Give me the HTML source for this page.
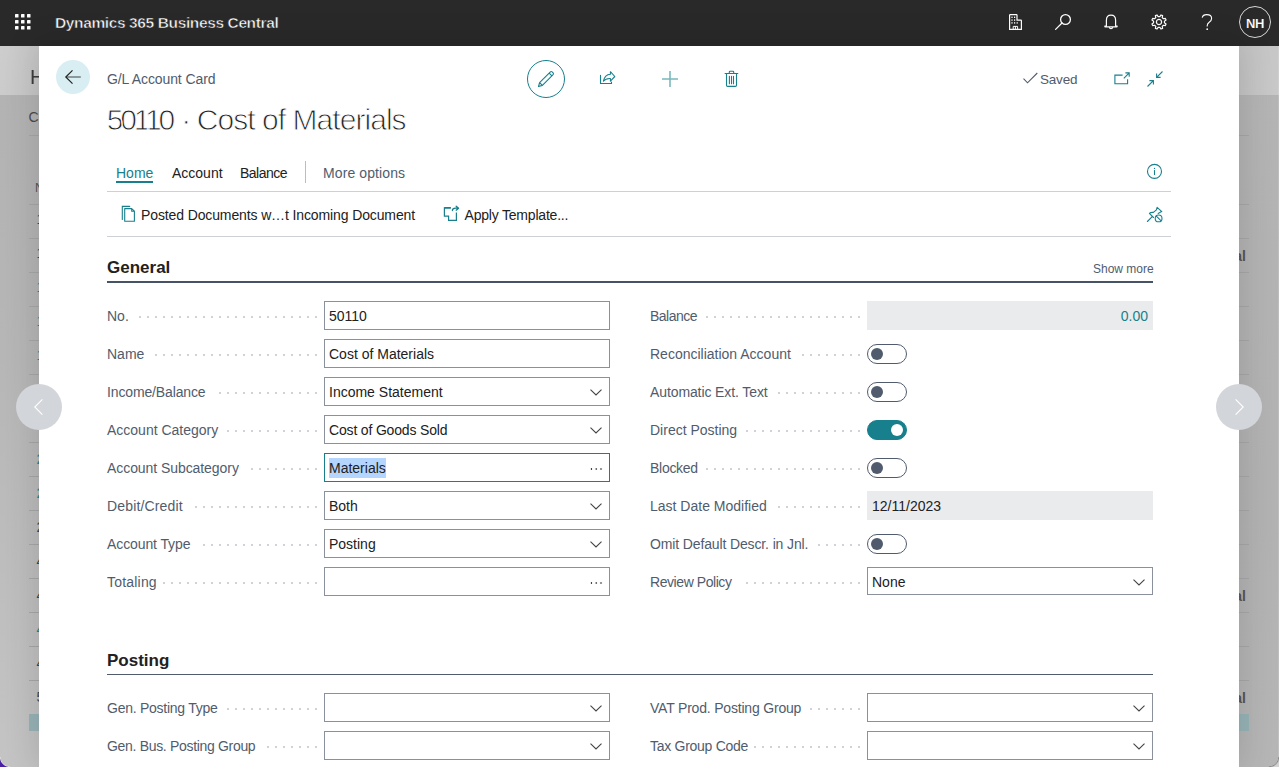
<!DOCTYPE html>
<html><head><meta charset="utf-8">
<style>
*{box-sizing:border-box;margin:0;padding:0}
html,body{width:1279px;height:767px;overflow:hidden;background:#bdbdbd;font-family:"Liberation Sans",sans-serif;position:relative}
#wrap{position:absolute;left:0;top:0;width:1279px;height:767px;will-change:opacity;opacity:0.999}
.a{position:absolute}
.t{position:absolute;white-space:nowrap;line-height:1}
#top{position:absolute;left:0;top:0;width:1279px;height:46px;background:#292929}
#bg{position:absolute;left:0;top:46px;width:1279px;height:721px;background:linear-gradient(20deg,#c4c4c4 0%,#b6b6b6 35%,#b2b2b2 60%,#b4b4b4 100%)}
#bghead{position:absolute;left:0;top:46px;width:1279px;height:50px;background:linear-gradient(100deg,#cdcdcd,#c5c5c5 4%,#c3c3c3 96%,#c8c8c8);border-bottom:1px solid #b3b3b3}
.bl{position:absolute;height:1px;background:#a6a6a6}
#dlg{position:absolute;left:39px;top:46px;width:1200px;height:721px;background:#fff;box-shadow:0 0 30px 4px rgba(0,0,0,0.12)}
.lbl{position:absolute;white-space:nowrap;line-height:1;font-size:14px;color:#505c6d}
.dots{position:absolute;height:2px;background-image:radial-gradient(circle,#d0d2d7 0.9px,transparent 1.1px);background-size:8px 2px;background-repeat:repeat-x}
.box{position:absolute;width:286px;height:29px;border:1px solid #8a919c;background:#fff}
.val{position:absolute;left:4px;top:7px;font-size:14px;line-height:1;color:#212121;white-space:nowrap}
.sel{background:#b4d5fe;padding:2px 0 2px 0}
.ro{position:absolute;width:286px;height:29px;background:#eaebed}
.chev{position:absolute;right:7px;top:11px}
.tog{position:absolute;width:40px;height:20px;border:1px solid #505c6d;border-radius:10px}
.tog i{position:absolute;left:3px;top:3px;width:12px;height:12px;border-radius:6px;background:#505c6d}
.tog.on{background:#17808c;border-color:#17808c}
.tog.on i{left:23px;background:#fff}
.ell{position:absolute;right:6px;top:14px;width:14px;height:2px;background-image:radial-gradient(circle,#333 0.8px,transparent 1.1px);background-size:4.8px 2px}
.ico{position:absolute;overflow:visible}
</style></head><body><div id="wrap">
<div id="top">
  <svg class="a" style="left:13px;top:12px" width="20" height="20" viewBox="0 0 20 20" fill="#fff">
    <rect x="2" y="2" width="3.5" height="3.5" rx=".6"/><rect x="8" y="2" width="3.5" height="3.5" rx=".6"/><rect x="14" y="2" width="3.5" height="3.5" rx=".6"/>
    <rect x="2" y="8" width="3.5" height="3.5" rx=".6"/><rect x="8" y="8" width="3.5" height="3.5" rx=".6"/><rect x="14" y="8" width="3.5" height="3.5" rx=".6"/>
    <rect x="2" y="14" width="3.5" height="3.5" rx=".6"/><rect x="8" y="14" width="3.5" height="3.5" rx=".6"/><rect x="14" y="14" width="3.5" height="3.5" rx=".6"/>
  </svg>
  <div class="t" style="left:55px;top:15px;font-size:15.5px;font-weight:700;color:#fff;letter-spacing:-0.38px;-webkit-text-stroke:0.5px #292929">Dynamics 365 Business Central</div>
  <!-- building -->
  <svg class="ico" style="left:1009px;top:14px" width="13" height="16" viewBox="0 0 13 16" fill="none" stroke="#fff" stroke-width="1.2">
    <path d="M0.6 15.4V1.2Q0.6 0.6 1.2 0.6H7.4Q8 0.6 8 1.2V6.2H11.8Q12.4 6.2 12.4 6.8V15.4Z"/>
    <path d="M4.2 15.4V12.4H8.6V15.4M6.4 12.4V15.4" stroke-width="1"/>
    <g fill="#fff" stroke="none"><rect x="2.4" y="2.6" width="1.2" height="1.4"/><rect x="5" y="2.6" width="1.2" height="1.4"/><rect x="2.4" y="5.4" width="1.2" height="1.4"/><rect x="5" y="5.4" width="1.2" height="1.4"/><rect x="2.4" y="8.2" width="1.2" height="1.4"/><rect x="5" y="8.2" width="1.2" height="1.4"/><rect x="7.6" y="8.2" width="1.2" height="1.4"/></g>
  </svg>
  <!-- search -->
  <svg class="ico" style="left:1055px;top:14px" width="16" height="16" viewBox="0 0 16 16" fill="none" stroke="#fff" stroke-width="1.3">
    <circle cx="10.5" cy="5.5" r="4.9"/><path d="M7 9L0.6 15.4" stroke-linecap="round"/>
  </svg>
  <!-- bell -->
  <svg class="ico" style="left:1104px;top:14px" width="14" height="16" viewBox="0 0 14 16" fill="none" stroke="#fff" stroke-width="1.2">
    <path d="M2.4 12.2V6.2Q2.4 1.2 7 1.2Q11.6 1.2 11.6 6.2V12.2H13.2Q13.2 12.9 12.5 12.9H1.5Q0.8 12.9 0.8 12.2Z" stroke-linejoin="round"/><path d="M5.3 13.2Q5.5 14.6 7 14.6Q8.5 14.6 8.7 13.2"/>
  </svg>
  <!-- gear -->
  <svg class="ico" style="left:1151px;top:14px" width="16" height="16" viewBox="-8 -8 16 16" fill="none" stroke="#fff" stroke-width="1.2">
    <path d="M5.43 0.86 L7.04 1.93 L6.34 3.62 L4.45 3.23 L3.23 4.45 L3.62 6.34 L1.93 7.04 L0.86 5.43 L-0.86 5.43 L-1.93 7.04 L-3.62 6.34 L-3.23 4.45 L-4.45 3.23 L-6.34 3.62 L-7.04 1.93 L-5.43 0.86 L-5.43 -0.86 L-7.04 -1.93 L-6.34 -3.62 L-4.45 -3.23 L-3.23 -4.45 L-3.62 -6.34 L-1.93 -7.04 L-0.86 -5.43 L0.86 -5.43 L1.93 -7.04 L3.62 -6.34 L3.23 -4.45 L4.45 -3.23 L6.34 -3.62 L7.04 -1.93 L5.43 -0.86Z" stroke-linejoin="round"/>
    <circle r="2.6"/>
  </svg>
  <!-- question -->
  <svg class="ico" style="left:1201px;top:14px" width="12" height="17" viewBox="0 0 12 17" fill="none" stroke="#fff" stroke-width="1.1">
    <path d="M1.2 3.6Q1.8 0.6 5.6 0.6Q10.6 0.6 10.6 4.4Q10.6 6.6 8.2 8.2Q6.2 9.6 6.2 11.8V12.4"/><circle cx="6.2" cy="15.2" r="0.9" fill="#fff" stroke="none"/>
  </svg>
  <!-- avatar -->
  <div class="a" style="left:1239px;top:6px;width:32px;height:32px;border:1px solid #d8d8d8;border-radius:16px"></div>
  <div class="t" style="left:1246px;top:16.5px;font-size:13px;font-weight:700;color:#fff;letter-spacing:-0.3px;-webkit-text-stroke:0.15px #292929">NH</div>
</div>

<div id="bg"></div>
<div id="bghead"></div>
<!-- background page fragments -->
<div class="t" style="left:30px;top:66.5px;font-size:20px;color:#3c3c3c">H</div>
<div class="t" style="left:28.5px;top:110px;font-size:14px;color:#4a4a4a">C</div>
<div class="t" style="left:35px;top:182px;font-size:12px;color:#555">N</div>
<div class="t" style="left:1206px;top:249px;font-size:14px;font-weight:700;color:#555;width:40px;text-align:right">Total</div>
<div class="t" style="left:1206px;top:589px;font-size:14px;font-weight:700;color:#555;width:40px;text-align:right">Total</div>
<div class="t" style="left:1206px;top:691px;font-size:14px;font-weight:700;color:#555;width:40px;text-align:right">Total</div>
<div class="a" style="left:0;top:757px;width:10px;height:10px;background:radial-gradient(circle at 10px 0,transparent 9px,#d8d8d8 9.6px,#4b1fa3 10.6px)"></div>
<div class="t" style="left:36.5px;top:212px;font-size:14px;color:#444">1</div>
<div class="t" style="left:36.5px;top:246px;font-size:14px;color:#444">1</div>
<div class="t" style="left:36.5px;top:280px;font-size:14px;color:#2a7f86">1</div>
<div class="t" style="left:36.5px;top:314px;font-size:14px;color:#2a7f86">1</div>
<div class="t" style="left:36.5px;top:348px;font-size:14px;color:#2a7f86">1</div>
<div class="t" style="left:36.5px;top:416px;font-size:14px;color:#444">1</div>
<div class="t" style="left:36.5px;top:452px;font-size:14px;color:#2a7f86">2</div>
<div class="t" style="left:36.5px;top:486px;font-size:14px;color:#2a7f86">2</div>
<div class="t" style="left:36.5px;top:520px;font-size:14px;color:#444">2</div>
<div class="t" style="left:36.5px;top:554px;font-size:14px;color:#444">4</div>
<div class="t" style="left:36.5px;top:588px;font-size:14px;color:#444">4</div>
<div class="t" style="left:36.5px;top:622px;font-size:14px;color:#2a7f86">4</div>
<div class="t" style="left:36.5px;top:656px;font-size:14px;color:#444">4</div>
<div class="t" style="left:36.5px;top:690px;font-size:14px;color:#444">5</div>
<div class="t" style="left:36.5px;top:715px;font-size:14px;color:#444">6</div>
<div class="a" style="left:1278px;top:46px;width:1px;height:721px;background:rgba(255,255,255,0.15)"></div>
<div class="a" style="left:1269px;top:757px;width:10px;height:10px;background:radial-gradient(circle at 0 0,transparent 9px,#8e8e8e 9.6px,#d3d3d3 10.8px)"></div>
<div class="bl" style="left:29px;top:135px;width:10px"></div>
<div class="bl" style="left:1239px;top:135px;width:10px"></div>
<div class="bl" style="left:29px;top:204px;width:10px"></div>
<div class="bl" style="left:1239px;top:204px;width:10px"></div>
<div class="bl" style="left:29px;top:238px;width:10px"></div>
<div class="bl" style="left:1239px;top:238px;width:10px"></div>
<div class="bl" style="left:29px;top:272px;width:10px"></div>
<div class="bl" style="left:1239px;top:272px;width:10px"></div>
<div class="bl" style="left:29px;top:306px;width:10px"></div>
<div class="bl" style="left:1239px;top:306px;width:10px"></div>
<div class="bl" style="left:29px;top:340px;width:10px"></div>
<div class="bl" style="left:1239px;top:340px;width:10px"></div>
<div class="bl" style="left:29px;top:374px;width:10px"></div>
<div class="bl" style="left:1239px;top:374px;width:10px"></div>
<div class="bl" style="left:29px;top:408px;width:10px"></div>
<div class="bl" style="left:1239px;top:408px;width:10px"></div>
<div class="bl" style="left:29px;top:442px;width:10px"></div>
<div class="bl" style="left:1239px;top:442px;width:10px"></div>
<div class="bl" style="left:29px;top:476px;width:10px"></div>
<div class="bl" style="left:1239px;top:476px;width:10px"></div>
<div class="bl" style="left:29px;top:510px;width:10px"></div>
<div class="bl" style="left:1239px;top:510px;width:10px"></div>
<div class="bl" style="left:29px;top:544px;width:10px"></div>
<div class="bl" style="left:1239px;top:544px;width:10px"></div>
<div class="bl" style="left:29px;top:578px;width:10px"></div>
<div class="bl" style="left:1239px;top:578px;width:10px"></div>
<div class="bl" style="left:29px;top:612px;width:10px"></div>
<div class="bl" style="left:1239px;top:612px;width:10px"></div>
<div class="bl" style="left:29px;top:646px;width:10px"></div>
<div class="bl" style="left:1239px;top:646px;width:10px"></div>
<div class="bl" style="left:29px;top:680px;width:10px"></div>
<div class="bl" style="left:1239px;top:680px;width:10px"></div>
<div class="a" style="left:29px;top:714px;width:10px;height:17px;background:#97b3b6"></div>
<div class="a" style="left:1239px;top:714px;width:10px;height:17px;background:#97b3b6"></div>

<div id="dlg"></div>

<!-- header -->
<div class="a" style="left:56px;top:60px;width:34px;height:34px;border-radius:17px;background:#d8eef2"></div>
<svg class="ico" style="left:65px;top:70px" width="16" height="14" viewBox="0 0 16 14" fill="none" stroke="#404040" stroke-width="1.3">
  <path d="M1.5 7H15.8" stroke="#6a7474" stroke-width="1.4"/><path d="M7.5 0.4L0.8 7L7.5 13.6" stroke="#222" stroke-width="1.2"/>
</svg>
<div class="t" style="left:107px;top:72px;font-size:14px;color:#505c6d;letter-spacing:-0.1px">G/L Account Card</div>
<div class="t" style="left:106.75px;top:104.5px;font-size:30px;color:#222;letter-spacing:-3.2px;-webkit-text-stroke:0.9px #fff">50110</div>
<div class="t" style="left:181.25px;top:104.5px;font-size:30px;color:#222;-webkit-text-stroke:0.9px #fff">·</div>
<div class="t" style="left:196.75px;top:104.5px;font-size:30px;color:#222;letter-spacing:-0.95px;-webkit-text-stroke:0.9px #fff">Cost of Materials</div>

<!-- action icons -->
<div class="a" style="left:527px;top:60px;width:38px;height:38px;border-radius:19px;border:1.5px solid #17808c"></div>
<svg class="ico" style="left:538px;top:71px" width="16" height="16" viewBox="0 0 16 16" fill="none" stroke="#17808c" stroke-width="1.1" stroke-linejoin="round">
  <path d="M0.5 15.5L1.6 11.6L12.4 0.9Q13.2 0.2 14.1 0.9L15.1 1.9Q15.8 2.8 15.1 3.6L4.4 14.4Z M1.6 11.6L4.4 14.4 M11.2 2.1L13.9 4.8"/>
</svg>
<svg class="ico" style="left:596px;top:66px" width="24" height="24" viewBox="0 0 24 24" fill="none" stroke="#17808c" stroke-width="1.1" stroke-linecap="round">
  <path d="M4.5 9.2V17.5H15.5V16"/>
  <path d="M7.4 15.2Q8.8 8.6 14.4 8.3V5.7L18.8 10.5L14.4 15.2V12.5Q9.8 12.2 7.4 15.2Z" stroke-linejoin="round"/>
</svg>
<svg class="ico" style="left:662px;top:71px" width="16" height="16" viewBox="0 0 16 16" fill="none" stroke="#7ab8bd" stroke-width="1.6">
  <path d="M8 0V16M0 8H16"/>
</svg>
<svg class="ico" style="left:719px;top:67px" width="24" height="24" viewBox="0 0 24 24" fill="none" stroke="#17808c" stroke-width="1.1" stroke-linecap="round">
  <path d="M6.1 6.5H18.8M10.3 6.5V5Q10.3 4.3 11 4.3H14Q14.7 4.3 14.7 5V6.5M7.5 6.5V18.3Q7.5 19.4 8.6 19.4H16.4Q17.5 19.4 17.5 18.3V6.5M10.4 9.2V16.8M12.5 9.2V16.8M14.5 9.2V16.8"/>
</svg>

<svg class="ico" style="left:1023px;top:72px" width="15" height="12" viewBox="0 0 15 12" fill="none" stroke="#505c6d" stroke-width="1.1">
  <path d="M0.5 6.6L4.5 10.8L14.3 1"/>
</svg>
<div class="t" style="left:1040px;top:72.5px;font-size:13.5px;color:#505c6d;letter-spacing:-0.2px">Saved</div>
<svg class="ico" style="left:1114px;top:72px" width="16" height="12" viewBox="0 0 16 12" fill="none" stroke="#17808c" stroke-width="1.1">
  <path d="M8.6 3.1H0.9V11.7H13.6V7.2M9.8 6.4L15 1.1M11.4 0.9H15.2V4.7"/>
</svg>
<svg class="ico" style="left:1147px;top:71px" width="16" height="16" viewBox="0 0 16 16" fill="none" stroke="#17808c" stroke-width="1.1">
  <path d="M15.5 0.5L9.6 6.4M9.6 2.4V6.4H13.6M0.5 15.5L6.4 9.6M2.4 9.6H6.4V13.6"/>
</svg>

<!-- tabs -->
<div class="t" style="left:116px;top:166px;font-size:14px;color:#17808c">Home</div>
<div class="a" style="left:116px;top:181px;width:37px;height:2px;background:#17808c"></div>
<div class="t" style="left:172px;top:166px;font-size:14px;color:#212121">Account</div>
<div class="t" style="left:240px;top:166px;font-size:14px;color:#212121;letter-spacing:-0.5px">Balance</div>
<div class="a" style="left:305px;top:161px;width:1px;height:22px;background:#b9bec6"></div>
<div class="t" style="left:323px;top:166px;font-size:14px;color:#505c6d;letter-spacing:0.1px">More options</div>
<svg class="ico" style="left:1142px;top:159px" width="24" height="24" viewBox="0 0 24 24" fill="none" stroke="#17808c" stroke-width="1.1">
  <circle cx="12.5" cy="12.4" r="7"/><path d="M12.5 11.1V16"/><circle cx="12.5" cy="9.4" r="0.7" fill="#17808c" stroke="none"/>
</svg>
<div class="a" style="left:107px;top:191px;width:1064px;height:1px;background:#cdd1d6"></div>

<svg class="ico" style="left:117px;top:200px" width="24" height="24" viewBox="0 0 24 24" fill="none" stroke="#17808c" stroke-width="1.1" stroke-linecap="round">
  <path d="M12.7 6.4H5.3V19.5"/>
  <path d="M7.7 8.6V21.3H17.4V11.2L14.7 8.6Z M14.7 8.6V11.2H17.4" stroke-linejoin="round"/>
</svg>
<div class="t" style="left:141px;top:208px;font-size:14px;color:#212121;letter-spacing:-0.12px">Posted Documents w…t Incoming Document</div>
<svg class="ico" style="left:438px;top:200px" width="24" height="24" viewBox="0 0 24 24" fill="none" stroke="#17808c" stroke-width="1.1">
  <path d="M12.8 7.8H6.4V16.2H10.6V20.3H18.4V12.4" stroke-width="1.2"/>
  <path d="M12.8 7.8H6.4" stroke-width="1.5"/>
  <path d="M14.4 10.6Q14.4 8.2 17.6 8.2H20.4 M18.2 6.2L20.6 8.2L18.2 10.2" stroke-width="1.3" stroke-linecap="round" stroke-linejoin="round"/>
</svg>
<div class="t" style="left:464.5px;top:208px;font-size:14px;color:#212121;letter-spacing:-0.2px">Apply Template...</div>
<svg class="ico" style="left:1142px;top:202px" width="24" height="24" viewBox="0 0 24 24" fill="none" stroke="#17808c" stroke-width="1.1" stroke-linejoin="round" stroke-linecap="round">
  <path d="M5.4 19.5L10.2 14.6 M11.5 15.5L7.4 11.4Q8.6 10.2 11.4 10.4L14.4 7.8L15.1 5.3L19.8 9.6Q18.4 10.2 16.2 11.4"/>
  <circle cx="16.6" cy="16.4" r="3.4"/><path d="M14.3 14.1L18.9 18.7"/>
</svg>
<div class="a" style="left:107px;top:236px;width:1064px;height:1px;background:#cdd1d6"></div>

<!-- General -->
<div class="t" style="left:107px;top:258.5px;font-size:17px;font-weight:700;color:#212121">General</div>
<div class="t" style="left:1093px;top:262.5px;font-size:12px;color:#505c6d">Show more</div>
<div class="a" style="left:107px;top:281px;width:1046px;height:2px;background:#465366"></div>

<!-- Posting -->
<div class="t" style="left:107px;top:651.5px;font-size:17px;font-weight:700;color:#212121">Posting</div>
<div class="a" style="left:107px;top:674px;width:1046px;height:1px;background:#505c6d"></div>

<div class="lbl" style="left:107px;top:309px">No.</div>
<div class="dots" style="left:136px;top:316px;width:184px"></div>
<div class="box" style="left:324px;top:301px"><div class="val">50110</div></div>
<div class="lbl" style="left:107px;top:347px">Name</div>
<div class="dots" style="left:152px;top:354px;width:168px"></div>
<div class="box" style="left:324px;top:339px"><div class="val">Cost of Materials</div></div>
<div class="lbl" style="left:107px;top:385px;letter-spacing:-0.138px">Income/Balance</div>
<div class="dots" style="left:216px;top:392px;width:104px"></div>
<div class="box" style="left:324px;top:377px"><div class="val">Income Statement</div><svg class="chev" width="12" height="7" viewBox="0 0 12 7"><path d="M0.5 0.6L6 5.9L11.5 0.6" fill="none" stroke="#444" stroke-width="1.1"/></svg></div>
<div class="lbl" style="left:107px;top:423px">Account Category</div>
<div class="dots" style="left:224px;top:430px;width:96px"></div>
<div class="box" style="left:324px;top:415px"><div class="val" style="letter-spacing:-0.17px">Cost of Goods Sold</div><svg class="chev" width="12" height="7" viewBox="0 0 12 7"><path d="M0.5 0.6L6 5.9L11.5 0.6" fill="none" stroke="#444" stroke-width="1.1"/></svg></div>
<div class="lbl" style="left:107px;top:461px;letter-spacing:-0.067px">Account Subcategory</div>
<div class="dots" style="left:248px;top:468px;width:72px"></div>
<div class="box" style="left:324px;top:453px;border-color:#17808c"><div class="val"><span class="sel">Materials</span></div><div class="ell"></div></div>
<div class="lbl" style="left:107px;top:499px;letter-spacing:0.155px">Debit/Credit</div>
<div class="dots" style="left:192px;top:506px;width:128px"></div>
<div class="box" style="left:324px;top:491px"><div class="val">Both</div><svg class="chev" width="12" height="7" viewBox="0 0 12 7"><path d="M0.5 0.6L6 5.9L11.5 0.6" fill="none" stroke="#444" stroke-width="1.1"/></svg></div>
<div class="lbl" style="left:107px;top:537px;letter-spacing:-0.1px">Account Type</div>
<div class="dots" style="left:200px;top:544px;width:120px"></div>
<div class="box" style="left:324px;top:529px"><div class="val">Posting</div><svg class="chev" width="12" height="7" viewBox="0 0 12 7"><path d="M0.5 0.6L6 5.9L11.5 0.6" fill="none" stroke="#444" stroke-width="1.1"/></svg></div>
<div class="lbl" style="left:107px;top:575px;letter-spacing:0.2px">Totaling</div>
<div class="dots" style="left:160px;top:582px;width:160px"></div>
<div class="box" style="left:324px;top:567px"><div class="ell"></div></div>
<div class="lbl" style="left:650px;top:309px;letter-spacing:-0.5px">Balance</div>
<div class="dots" style="left:703px;top:316px;width:160px"></div>
<div class="ro" style="left:867px;top:301px"><div class="val" style="left:auto;right:5px;top:8px;color:#17808c">0.00</div></div>
<div class="lbl" style="left:650px;top:347px">Reconciliation Account</div>
<div class="dots" style="left:799px;top:354px;width:64px"></div>
<div class="tog" style="left:867px;top:344px"><i></i></div>
<div class="lbl" style="left:650px;top:385px;letter-spacing:-0.106px">Automatic Ext. Text</div>
<div class="dots" style="left:775px;top:392px;width:88px"></div>
<div class="tog" style="left:867px;top:382px"><i></i></div>
<div class="lbl" style="left:650px;top:423px">Direct Posting</div>
<div class="dots" style="left:743px;top:430px;width:120px"></div>
<div class="tog on" style="left:867px;top:420px"><i></i></div>
<div class="lbl" style="left:650px;top:461px;letter-spacing:-0.283px">Blocked</div>
<div class="dots" style="left:703px;top:468px;width:160px"></div>
<div class="tog" style="left:867px;top:458px"><i></i></div>
<div class="lbl" style="left:650px;top:499px">Last Date Modified</div>
<div class="dots" style="left:775px;top:506px;width:88px"></div>
<div class="ro" style="left:867px;top:491px"><div class="val" style="left:5px;top:8px">12/11/2023</div></div>
<div class="lbl" style="left:650px;top:537px;letter-spacing:-0.131px">Omit Default Descr. in Jnl.</div>
<div class="dots" style="left:815px;top:544px;width:48px"></div>
<div class="tog" style="left:867px;top:534px"><i></i></div>
<div class="lbl" style="left:650px;top:575px;letter-spacing:-0.433px">Review Policy</div>
<div class="dots" style="left:743px;top:582px;width:120px"></div>
<div class="box" style="left:867px;top:567px;height:28px"><div class="val">None</div><svg class="chev" width="12" height="7" viewBox="0 0 12 7"><path d="M0.5 0.6L6 5.9L11.5 0.6" fill="none" stroke="#444" stroke-width="1.1"/></svg></div>
<div class="lbl" style="left:107px;top:701px;letter-spacing:-0.256px">Gen. Posting Type</div>
<div class="dots" style="left:224px;top:708px;width:96px"></div>
<div class="box" style="left:324px;top:693px"><svg class="chev" width="12" height="7" viewBox="0 0 12 7"><path d="M0.5 0.6L6 5.9L11.5 0.6" fill="none" stroke="#444" stroke-width="1.1"/></svg></div>
<div class="lbl" style="left:107px;top:739px;letter-spacing:-0.318px">Gen. Bus. Posting Group</div>
<div class="dots" style="left:264px;top:746px;width:56px"></div>
<div class="box" style="left:324px;top:731px"><svg class="chev" width="12" height="7" viewBox="0 0 12 7"><path d="M0.5 0.6L6 5.9L11.5 0.6" fill="none" stroke="#444" stroke-width="1.1"/></svg></div>
<div class="lbl" style="left:650px;top:701px;letter-spacing:-0.195px">VAT Prod. Posting Group</div>
<div class="dots" style="left:807px;top:708px;width:56px"></div>
<div class="box" style="left:867px;top:693px"><svg class="chev" width="12" height="7" viewBox="0 0 12 7"><path d="M0.5 0.6L6 5.9L11.5 0.6" fill="none" stroke="#444" stroke-width="1.1"/></svg></div>
<div class="lbl" style="left:650px;top:739px;letter-spacing:-0.285px">Tax Group Code</div>
<div class="dots" style="left:751px;top:746px;width:112px"></div>
<div class="box" style="left:867px;top:731px"><svg class="chev" width="12" height="7" viewBox="0 0 12 7"><path d="M0.5 0.6L6 5.9L11.5 0.6" fill="none" stroke="#444" stroke-width="1.1"/></svg></div>

<!-- nav circles -->
<div class="a" style="left:16px;top:384px;width:46px;height:46px;border-radius:23px;background:#d2d5d9"></div>
<svg class="ico" style="left:34px;top:399px" width="9" height="16" viewBox="0 0 9 16" fill="none" stroke="#fff" stroke-width="1.1"><path d="M8.4 0.4L0.8 8L8.4 15.6"/></svg>
<div class="a" style="left:1216px;top:384px;width:46px;height:46px;border-radius:23px;background:#d2d5d9"></div>
<svg class="ico" style="left:1235px;top:399px" width="9" height="16" viewBox="0 0 9 16" fill="none" stroke="#fff" stroke-width="1.1"><path d="M0.6 0.4L8.2 8L0.6 15.6"/></svg>

</div></body></html>
